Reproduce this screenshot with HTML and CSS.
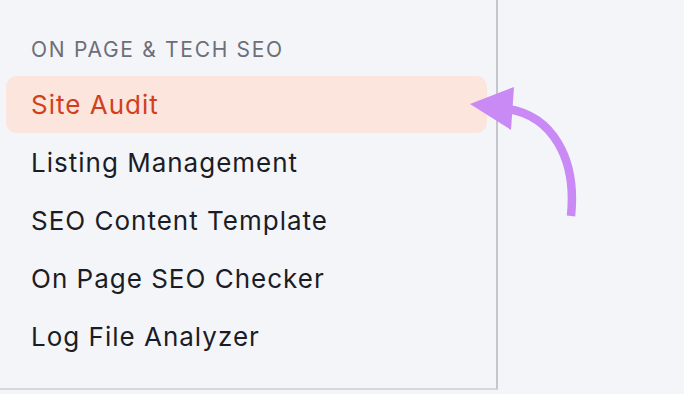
FILE: index.html
```html
<!DOCTYPE html>
<html>
<head>
<meta charset="utf-8">
<link rel="stylesheet" href="styles.css">
</head>
<body>
<div class="page">
  <nav class="sidebar">
    <div class="group">
      <div class="heading">ON PAGE &amp; TECH SEO</div>
      <ul class="menu">
        <li class="item active">Site Audit</li>
        <li class="item">Listing Management</li>
        <li class="item">SEO Content Template</li>
        <li class="item">On Page SEO Checker</li>
        <li class="item">Log File Analyzer</li>
      </ul>
    </div>
  </nav>
  <div class="main"></div>
  <svg class="arrow" width="684" height="394" viewBox="0 0 684 394">
    <path d="M508 109 C552 116 577 158 571 216" fill="none" stroke="#c98af5" stroke-width="8.5"/>
    <polygon points="470,104 514,87 511,130" fill="#c98af5"/>
  </svg>
</div>
</body>
</html>
```
FILE: styles.css
```css
html, body {
  margin: 0;
  padding: 0;
  background: #f4f5f9;
}
.page {
  position: relative;
  width: 684px;
  height: 394px;
  display: flex;
  overflow: hidden;
  font-family: Inter, "Noto Sans", sans-serif;
}
.sidebar {
  width: 496px;
  height: 388px;
  flex: none;
  border-right: 2px solid #c6c6ca;
  border-bottom: 2px solid #d6d7dc;
}
.main {
  flex: 1;
}
.group {
  padding: 37px 9px 0 6px;
}
.heading {
  padding-left: 25px;
  font-size: 21px;
  line-height: 26px;
  color: #6c6e78;
  letter-spacing: 1.7px;
  margin-bottom: 13px;
}
.menu {
  list-style: none;
  margin: 0;
  padding: 0;
  display: flex;
  flex-direction: column;
  gap: 1px;
}
.item {
  height: 57px;
  display: flex;
  align-items: center;
  padding-left: 25px;
  font-size: 26px;
  letter-spacing: 1px;
  color: #1b1d26;
  border-radius: 11px;
}
.item.active {
  background: #fbe5dd;
  color: #d1401c;
}
.arrow {
  position: absolute;
  left: 0;
  top: 0;
}
```
